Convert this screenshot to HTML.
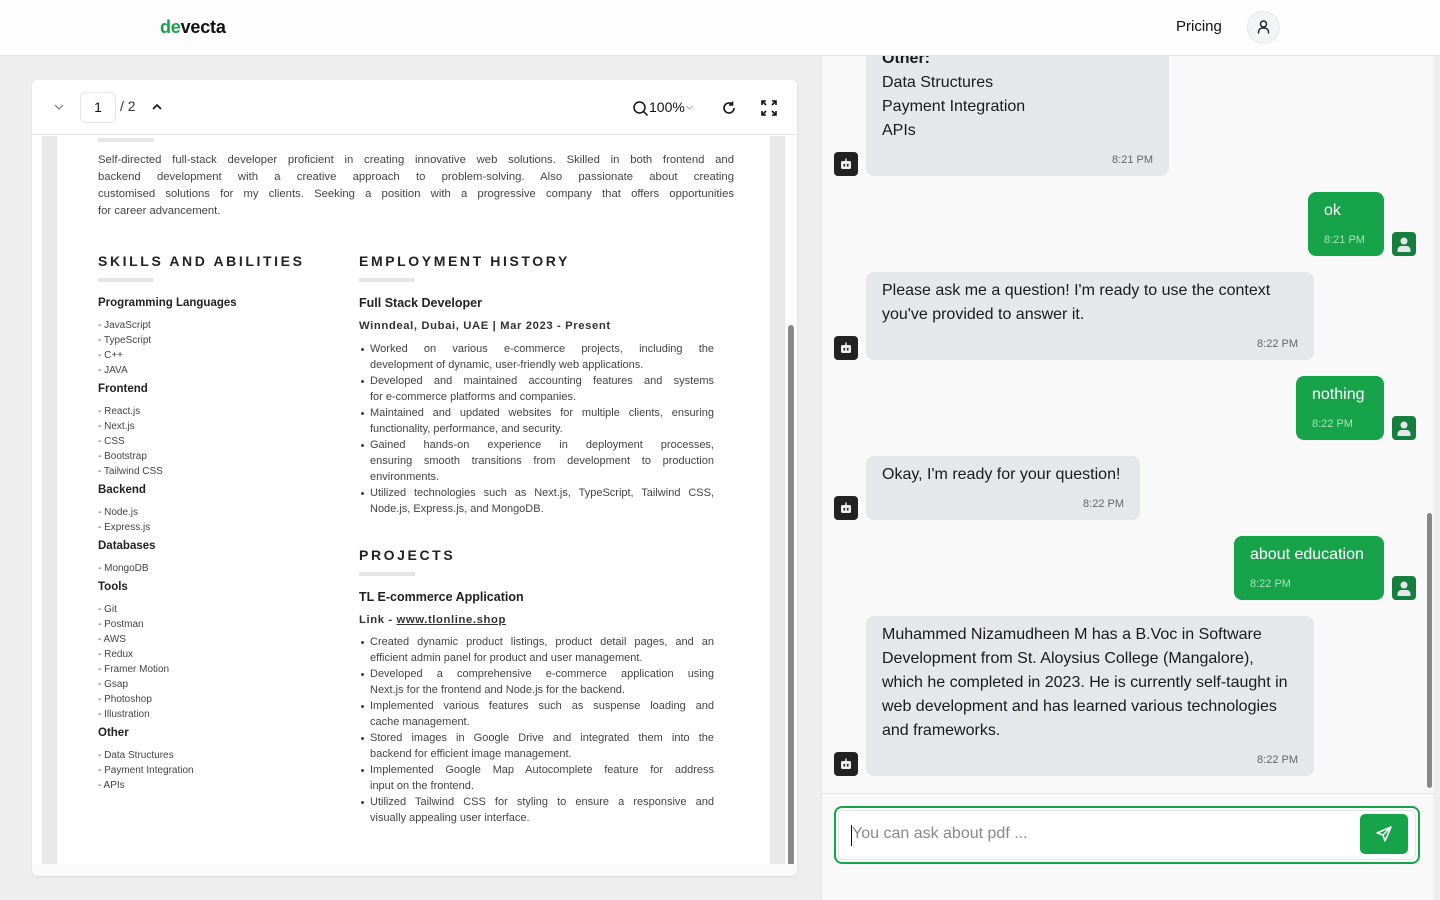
<!DOCTYPE html>
<html><head><meta charset="utf-8">
<style>
*{box-sizing:border-box;margin:0;padding:0}
body{width:1440px;height:900px;overflow:hidden;background:#eeeeee;font-family:"Liberation Sans",sans-serif;position:relative;color:#111}
.abs{position:absolute}
#hdr{left:0;top:0;width:1440px;height:56px;background:#fdfdfd;border-bottom:1px solid #e3e3e3;z-index:5}
#card{left:32px;top:80px;width:765px;height:796px;background:#fff;border-radius:6px;box-shadow:0 1px 3px rgba(0,0,0,.08);overflow:hidden}
.pg{font-family:"Liberation Sans",sans-serif;color:#333}
.h2{font-size:14px;font-weight:bold;letter-spacing:2.6px;color:#222}
.bar{width:56px;height:4px;background:#e6e6e6}
.sh{font-size:11.5px;font-weight:bold;color:#222}
.li{font-size:10px;color:#444;line-height:15px}
.j{display:block;text-align:justify;text-align-last:justify;white-space:nowrap}
.bl{font-size:11px;color:#444;line-height:16px;width:344px}
.bl div{position:relative}
.bul::before{content:"";position:absolute;left:-9px;top:7px;width:3px;height:3px;border-radius:50%;background:#444}
#chat{left:821px;top:56px;width:619px;height:844px;background:#f9f9f9;border-left:1px solid #e5e5e5}
.bot{background:#e5e7eb;border-radius:8px;color:#1a1a1a;font-size:16px;line-height:24px;padding:0 16px}
.usr{background:#16a34a;border-radius:8px;color:#fff;font-size:16px;line-height:24px;padding:0 16px}
.t{font-size:11px;color:#666;text-align:right}
.usr .t{color:#a7e3b9;text-align:left}
.ba{width:24px;height:24px;border-radius:4px;background:#222}
.ua{width:24px;height:24px;border-radius:4px;background:#15803d}
</style></head><body>

<div id="hdr" class="abs">
  <div class="abs" style="left:160px;top:17px;font-size:18px;font-weight:bold;letter-spacing:-0.2px"><span style="color:#16a34a">de</span><span style="color:#111">vecta</span></div>
  <div class="abs" style="left:1176px;top:18px;font-size:15px;color:#111">Pricing</div>
  <div class="abs" style="left:1247px;top:11px;width:33px;height:33px;border-radius:50%;background:#f3f4f6;border:1px solid #e5e7eb">
    <svg width="33" height="33" viewBox="0 0 33 33" style="position:absolute;left:-1px;top:-1px"><circle cx="16.5" cy="13" r="3" fill="none" stroke="#222" stroke-width="1.4"/><path d="M11.5 22.5v-1.5a4 4 0 0 1 4-4h2a4 4 0 0 1 4 4v1.5" fill="none" stroke="#222" stroke-width="1.4"/></svg>
  </div>
</div>

<div id="card" class="abs">
  <div class="abs" style="left:0;top:0;width:765px;height:55px;border-bottom:1px solid #e8e8e8;background:#fff"></div>
  <svg class="abs" style="left:21px;top:22px" width="12" height="10"><path d="M2 3l4 4 4-4" fill="none" stroke="#777" stroke-width="1.2"/></svg>
  <div class="abs" style="left:48px;top:12px;width:36px;height:31px;border:1px solid #e5e5e5;border-radius:6px;font-size:14px;text-align:center;line-height:29px">1</div>
  <div class="abs" style="left:88px;top:18px;font-size:14px;color:#333">/ 2</div>
  <svg class="abs" style="left:119px;top:22px" width="12" height="10"><path d="M2 7l4-4 4 4" fill="none" stroke="#111" stroke-width="1.6"/></svg>
  <svg class="abs" style="left:600px;top:20px" width="17" height="17"><circle cx="7.5" cy="7.5" r="5.5" fill="none" stroke="#111" stroke-width="1.5"/><path d="M11.5 11.5l4 4" stroke="#111" stroke-width="1.5"/></svg>
  <div class="abs" style="left:617px;top:19px;font-size:14px;color:#111">100%</div>
  <svg class="abs" style="left:653px;top:24px" width="9" height="7"><path d="M1 2l3.5 3 3.5-3" fill="none" stroke="#aaa" stroke-width="1"/></svg>
  <svg class="abs" style="left:688px;top:19px" width="18" height="18"><path d="M14 9a5 5 0 1 1-2-4" fill="none" stroke="#111" stroke-width="1.6"/><path d="M12.5 2.5v3.5h-3.5" fill="none" stroke="#111" stroke-width="1.6"/></svg>
  <svg class="abs" style="left:729px;top:20px" width="16" height="16" fill="none" stroke="#111" stroke-width="1.6"><path d="M1 5V1h4M1 1l4 4M11 1h4v4M15 1l-4 4M1 11v4h4M1 15l4-4M15 11v4h-4M15 15l-4-4"/></svg>

  <div class="abs" style="left:10px;top:56px;width:15px;height:728px;background:#e8e8e8"></div>
  <div class="abs" style="left:738px;top:56px;width:15px;height:728px;background:#e8e8e8"></div>
  <div class="abs" style="left:756px;top:245px;width:6px;height:548px;border-radius:3px;background:#8a8a8a"></div>
  <div class="abs" style="left:0;top:784px;width:765px;height:12px;background:#fafafa"></div>

  <div class="pg">
    <div class="abs bar" style="left:66px;top:58px"></div>
    <div class="abs" style="left:66px;top:72px;width:636px;font-size:11.3px;line-height:17px;color:#444">
      <span class="j">Self-directed full-stack developer proficient in creating innovative web solutions. Skilled in both frontend and</span>
      <span class="j">backend development with a creative approach to problem-solving. Also passionate about creating</span>
      <span class="j">customised solutions for my clients. Seeking a position with a progressive company that offers opportunities</span>
      <span style="display:block">for career advancement.</span>
    </div>

    <div class="abs h2" style="left:66px;top:173px">SKILLS AND ABILITIES</div>
    <div class="abs bar" style="left:66px;top:198px"></div>
    <div class="abs sh" style="left:66px;top:217px">Programming Languages</div>
    <div class="abs li" style="left:66px;top:238px">- JavaScript<br>- TypeScript<br>- C++<br>- JAVA</div>
    <div class="abs sh" style="left:66px;top:303px">Frontend</div>
    <div class="abs li" style="left:66px;top:324px">- React.js<br>- Next.js<br>- CSS<br>- Bootstrap<br>- Tailwind CSS</div>
    <div class="abs sh" style="left:66px;top:404px">Backend</div>
    <div class="abs li" style="left:66px;top:425px">- Node.js<br>- Express.js</div>
    <div class="abs sh" style="left:66px;top:460px">Databases</div>
    <div class="abs li" style="left:66px;top:481px">- MongoDB</div>
    <div class="abs sh" style="left:66px;top:501px">Tools</div>
    <div class="abs li" style="left:66px;top:522px">- Git<br>- Postman<br>- AWS<br>- Redux<br>- Framer Motion<br>- Gsap<br>- Photoshop<br>- Illustration</div>
    <div class="abs sh" style="left:66px;top:647px">Other</div>
    <div class="abs li" style="left:66px;top:668px">- Data Structures<br>- Payment Integration<br>- APIs</div>

    <div class="abs h2" style="left:327px;top:173px">EMPLOYMENT HISTORY</div>
    <div class="abs bar" style="left:327px;top:198px"></div>
    <div class="abs sh" style="left:327px;top:216px;font-size:12.5px">Full Stack Developer</div>
    <div class="abs" style="left:327px;top:240px;font-size:11.3px;font-weight:bold;letter-spacing:.6px;color:#333">Winndeal, Dubai, UAE | Mar 2023 - Present</div>
    <div class="abs bl" style="left:338px;top:261px">
      <div class="bul j">Worked on various e-commerce projects, including the</div>
      <div>development of dynamic, user-friendly web applications.</div>
      <div class="bul j">Developed and maintained accounting features and systems</div>
      <div>for e-commerce platforms and companies.</div>
      <div class="bul j">Maintained and updated websites for multiple clients, ensuring</div>
      <div>functionality, performance, and security.</div>
      <div class="bul j">Gained hands-on experience in deployment processes,</div>
      <div class="j">ensuring smooth transitions from development to production</div>
      <div>environments.</div>
      <div class="bul j">Utilized technologies such as Next.js, TypeScript, Tailwind CSS,</div>
      <div>Node.js, Express.js, and MongoDB.</div>
    </div>

    <div class="abs h2" style="left:327px;top:467px">PROJECTS</div>
    <div class="abs bar" style="left:327px;top:492px"></div>
    <div class="abs sh" style="left:327px;top:510px;font-size:12.5px">TL E-commerce Application</div>
    <div class="abs" style="left:327px;top:534px;font-size:11.3px;font-weight:bold;letter-spacing:.6px;color:#333">Link - <span style="text-decoration:underline">www.tlonline.shop</span></div>
    <div class="abs bl" style="left:338px;top:554px">
      <div class="bul j">Created dynamic product listings, product detail pages, and an</div>
      <div>efficient admin panel for product and user management.</div>
      <div class="bul j">Developed a comprehensive e-commerce application using</div>
      <div>Next.js for the frontend and Node.js for the backend.</div>
      <div class="bul j">Implemented various features such as suspense loading and</div>
      <div>cache management.</div>
      <div class="bul j">Stored images in Google Drive and integrated them into the</div>
      <div>backend for efficient image management.</div>
      <div class="bul j">Implemented Google Map Autocomplete feature for address</div>
      <div>input on the frontend.</div>
      <div class="bul j">Utilized Tailwind CSS for styling to ensure a responsive and</div>
      <div>visually appealing user interface.</div>
    </div>
  </div>
</div>

<div id="chat" class="abs">
  <div class="abs bot" style="left:44px;top:-10px;width:303px;height:130px;padding-top:1px">
    <div style="font-weight:bold;margin-top:0">Other:</div>
    <div>Data Structures</div><div>Payment Integration</div><div>APIs</div>
    <div class="t" style="margin-top:5px">8:21 PM</div>
  </div>
  <div class="abs ba" style="left:12px;top:96px"><svg width="24" height="24"><rect x="7" y="9" width="10" height="8" rx="1.5" fill="#eee"/><rect x="9.5" y="12" width="1.6" height="2.5" fill="#222"/><rect x="12.9" y="12" width="1.6" height="2.5" fill="#222"/><rect x="11.3" y="6.5" width="1.4" height="2.5" fill="#eee"/></svg></div>

  <div class="abs usr" style="left:486px;top:136px;width:76px;height:64px;padding-top:7px">ok<div class="t" style="margin-top:5px">8:21 PM</div></div>
  <div class="abs ua" style="left:570px;top:176px"><svg width="24" height="24"><circle cx="12" cy="9" r="3.5" fill="#e5e7eb"/><path d="M5.5 20v-2a4 4 0 0 1 4-4h5a4 4 0 0 1 4 4v2z" fill="#e5e7eb"/></svg></div>

  <div class="abs bot" style="left:44px;top:216px;width:448px;height:88px;padding-top:7px">Please ask me a question! I'm ready to use the context<br>you've provided to answer it.<div class="t" style="margin-top:5px">8:22 PM</div></div>
  <div class="abs ba" style="left:12px;top:280px"><svg width="24" height="24"><rect x="7" y="9" width="10" height="8" rx="1.5" fill="#eee"/><rect x="9.5" y="12" width="1.6" height="2.5" fill="#222"/><rect x="12.9" y="12" width="1.6" height="2.5" fill="#222"/><rect x="11.3" y="6.5" width="1.4" height="2.5" fill="#eee"/></svg></div>

  <div class="abs usr" style="left:474px;top:320px;width:88px;height:64px;padding-top:7px">nothing<div class="t" style="margin-top:5px">8:22 PM</div></div>
  <div class="abs ua" style="left:570px;top:360px"><svg width="24" height="24"><circle cx="12" cy="9" r="3.5" fill="#e5e7eb"/><path d="M5.5 20v-2a4 4 0 0 1 4-4h5a4 4 0 0 1 4 4v2z" fill="#e5e7eb"/></svg></div>

  <div class="abs bot" style="left:44px;top:400px;width:274px;height:64px;padding-top:7px">Okay, I'm ready for your question!<div class="t" style="margin-top:5px">8:22 PM</div></div>
  <div class="abs ba" style="left:12px;top:440px"><svg width="24" height="24"><rect x="7" y="9" width="10" height="8" rx="1.5" fill="#eee"/><rect x="9.5" y="12" width="1.6" height="2.5" fill="#222"/><rect x="12.9" y="12" width="1.6" height="2.5" fill="#222"/><rect x="11.3" y="6.5" width="1.4" height="2.5" fill="#eee"/></svg></div>

  <div class="abs usr" style="left:412px;top:480px;width:150px;height:64px;padding-top:7px">about education<div class="t" style="margin-top:5px">8:22 PM</div></div>
  <div class="abs ua" style="left:570px;top:520px"><svg width="24" height="24"><circle cx="12" cy="9" r="3.5" fill="#e5e7eb"/><path d="M5.5 20v-2a4 4 0 0 1 4-4h5a4 4 0 0 1 4 4v2z" fill="#e5e7eb"/></svg></div>

  <div class="abs bot" style="left:44px;top:560px;width:448px;height:160px;padding-top:7px">Muhammed Nizamudheen M has a B.Voc in Software<br>Development from St. Aloysius College (Mangalore),<br>which he completed in 2023. He is currently self-taught in<br>web development and has learned various technologies<br>and frameworks.<div class="t" style="margin-top:5px">8:22 PM</div></div>
  <div class="abs ba" style="left:12px;top:696px"><svg width="24" height="24"><rect x="7" y="9" width="10" height="8" rx="1.5" fill="#eee"/><rect x="9.5" y="12" width="1.6" height="2.5" fill="#222"/><rect x="12.9" y="12" width="1.6" height="2.5" fill="#222"/><rect x="11.3" y="6.5" width="1.4" height="2.5" fill="#eee"/></svg></div>

  <div class="abs" style="left:605px;top:457px;width:5px;height:275px;border-radius:3px;background:#888"></div>
  <div class="abs" style="left:0;top:737px;width:611px;height:1px;background:#e3e3e3"></div>
  <div class="abs" style="left:611px;top:0;width:8px;height:844px;background:#eeeeee"></div>

  <div class="abs" style="left:12px;top:750px;width:586px;height:58px;border:2px solid #16a34a;border-radius:8px;background:#fff">
    <div class="abs" style="left:2px;top:2px;width:578px;height:50px;border:1px solid #e5e5e5;border-radius:5px"></div>
    <div class="abs" style="left:15px;top:17px;width:1px;height:21px;background:#111"></div>
    <div class="abs" style="left:16px;top:17px;font-size:16px;color:#888">You can ask about pdf ...</div>
    <div class="abs" style="left:524px;top:6px;width:48px;height:40px;border-radius:5px;background:#16a34a">
      <svg width="48" height="40" fill="none" stroke="#fff" stroke-width="1.5" stroke-linejoin="round"><path d="M31 13L17 19l6 2 2 6z"/><path d="M31 13l-8 8"/></svg>
    </div>
  </div>
</div>
</body></html>
